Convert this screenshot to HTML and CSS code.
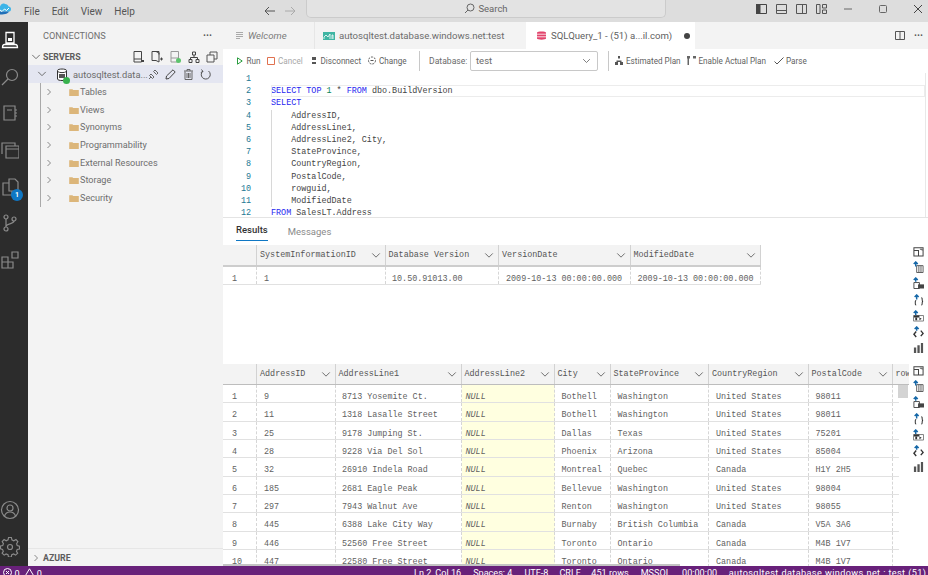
FILE: index.html
```html
<!DOCTYPE html>
<html lang="en">
<head>
<meta charset="utf-8">
<title>SQLQuery_1</title>
<link rel="stylesheet" href="styles.css">
</head>
<body>
<svg class="defs" width="0" height="0">
  <defs>
    <symbol id="chev-r" viewBox="0 0 8 10"><path d="M2 1l4 4-4 4" fill="none" stroke="#666" stroke-width="1"/></symbol>
    <symbol id="chev-d" viewBox="0 0 12 8"><path d="M1.5 1.5L6 6l4.5-4.5" fill="none" stroke="#555" stroke-width="1"/></symbol>
    <symbol id="folder" viewBox="0 0 12 10"><path d="M0 1.5h4l1 1h7V10H0z" fill="#dcb67a"/></symbol>
    <symbol id="r-save" viewBox="0 0 12 12"><path d="M1 2h10v9H1zM1 5h5v6" fill="none" stroke="#444" stroke-width="1.100"/><path d="M7.500 3.500h2.500v1.500" fill="none" stroke="#444"/></symbol>
    <symbol id="r-csv" viewBox="0 0 12 13"><path d="M4 5h7v7.500H4zM6.400 5v7.500M8.700 5v7.500" fill="none" stroke="#555"/><path d="M3 6V1M.8 3.200L3 1l2.200 2.200" fill="none" stroke="#1668a8" stroke-width="1.600"/></symbol>
    <symbol id="r-xls" viewBox="0 0 12 13"><path d="M1 6h6v6.500H1z" fill="none" stroke="#444"/><path d="M5.500 8H12v4.500H5.500z" fill="#444"/><path d="M3 5V1M.8 3.200L3 1l2.200 2.200" fill="none" stroke="#1668a8" stroke-width="1.600"/></symbol>
    <symbol id="r-json" viewBox="0 0 12 13"><path d="M3.500 7c-1.200 0-1 1.500-1 2.500s-.2 2.500 1 2.500M9 4c1.200 0 1 1.500 1 2.500s.2 1.500 1 1.500c-.8 0-1 .5-1 1.500s.2 2.500-1 2.500" fill="none" stroke="#333" stroke-width="1.100"/><path d="M4 6V1M1.800 3.200L4 1l2.200 2.200" fill="none" stroke="#1668a8" stroke-width="1.600"/></symbol>
    <symbol id="r-md" viewBox="0 0 12 13"><path d="M.5 6h11v6H.5z" fill="none" stroke="#777"/><path d="M3 5.500V1M.8 3.200L3 1l2.200 2.200" fill="none" stroke="#1668a8" stroke-width="1.600"/><path d="M1 6h6v2H1zM2.500 8.500h2v2.500h-2zM7 8l2.500 1.500L7 11z" fill="#333"/></symbol>
    <symbol id="r-xml" viewBox="0 0 12 13"><path d="M3.500 6L1 9l2.500 3M8.500 5L11 8l-2.500 3" fill="none" stroke="#333" stroke-width="1.500"/><path d="M4 5V1M1.800 3.200L4 1l2.200 2.200" fill="none" stroke="#1668a8" stroke-width="1.600"/></symbol>
    <symbol id="r-chart" viewBox="0 0 12 12"><path d="M1 6h2.500v6H1zM4.800 3.500h2.500V12H4.800zM8.600 1H11v11H8.600z" fill="#555"/></symbol>
  </defs>
</svg>

<div class="app">
  <header class="titlebar">
    <svg class="logo" width="11" height="12" viewBox="0 0 11 12"><path d="M0 3.500c1-2.500 3-3.500 5-2.500 2 0 3 1 3.500 2.500 1.500 0 2.500 1 2.500 2.500 0 2-1 2.500-2 2.500H0z" fill="#3cb4e8"/><path d="M0 8.500h9c-1 2-3 3-9 3z" fill="#1f6fb8"/><path d="M0 7l2 1.500L4.500 6l2 1.500L9 5" fill="none" stroke="#fff"/></svg>
    <nav class="menu"><span>File</span><span>Edit</span><span>View</span><span>Help</span></nav>
    <div class="history">
      <svg width="12" height="10" viewBox="0 0 12 10"><path d="M11 5H1.500M5 1L1 5l4 4" fill="none" stroke="#555"/></svg>
      <svg width="12" height="10" viewBox="0 0 12 10"><path d="M1 5h9.500M7 1l4 4-4 4" fill="none" stroke="#aaa"/></svg>
    </div>
    <div class="search">
      <svg width="11" height="11" viewBox="0 0 11 11"><circle cx="6.500" cy="4.500" r="3.500" fill="none" stroke="#666"/><path d="M4 7l-3 3" stroke="#666" fill="none"/></svg>
      <span>Search</span>
    </div>
    <div class="layout-icons">
      <svg width="11" height="10" viewBox="0 0 11 10"><path d="M.5.500h10v9H.5z" fill="none" stroke="#444"/><path d="M0 0h4.500v10H0z" fill="#444"/></svg>
      <svg width="11" height="10" viewBox="0 0 11 10"><path d="M.5.500h10v9H.5zM.5 6.500h10" fill="none" stroke="#555"/></svg>
      <svg width="11" height="10" viewBox="0 0 11 10"><path d="M.5.500h10v9H.5zM6.500.500v9" fill="none" stroke="#555"/></svg>
      <svg width="11" height="10" viewBox="0 0 11 10"><path d="M.5.500h3.500v9H.5zM6.500.500h4v3.500h-4zM6.500 6h4v3.500h-4z" fill="none" stroke="#555"/></svg>
    </div>
    <div class="window-controls">
      <svg width="10" height="10" viewBox="0 0 10 10"><path d="M1 5h8" stroke="#666"/></svg>
      <svg width="10" height="10" viewBox="0 0 10 10"><rect x="1.500" y="1.500" width="7" height="7" rx="1" fill="none" stroke="#666"/></svg>
      <svg width="10" height="10" viewBox="0 0 10 10"><path d="M1 1l8 8M9 1L1 9" stroke="#444" fill="none"/></svg>
    </div>
  </header>

  <div class="main">
    <aside class="activity">
      <div class="activity-top">
        <svg class="act" width="18" height="18" viewBox="0 0 18 18"><path d="M5 1.500h8V12H5zM1.500 16.500c0-2 1-3 2-3h11c1 0 2 1 2 3z" fill="none" stroke="#fff" stroke-width="1.300"/><path d="M7 7h4v3H7z" fill="#fff"/></svg>
        <svg class="act" width="18" height="18" viewBox="0 0 18 18"><circle cx="11" cy="7" r="5.500" fill="none" stroke="#8b8b8b" stroke-width="1.200"/><path d="M7 11l-6 6" stroke="#8b8b8b" stroke-width="1.200"/></svg>
        <svg class="act" width="18" height="18" viewBox="0 0 18 18"><path d="M3 2h11v14H3zM6 6h5M14 6h2M14 9h2M14 12h2" fill="none" stroke="#8b8b8b" stroke-width="1.200"/></svg>
        <svg class="act" width="18" height="18" viewBox="0 0 18 18"><path d="M5 5h13v12H5zM5 8h13M1 13V2h13v3" fill="none" stroke="#8b8b8b" stroke-width="1.200"/></svg>
        <div class="act-badge">
          <svg class="act" width="18" height="18" viewBox="0 0 18 18"><path d="M8 1h6l3 3v9H8zM8 5H2v12h9v-4" fill="none" stroke="#8b8b8b" stroke-width="1.200"/></svg>
          <span class="badge">1</span>
        </div>
        <svg class="act" width="18" height="18" viewBox="0 0 18 18"><circle cx="5" cy="3" r="2" fill="none" stroke="#8b8b8b" stroke-width="1.200"/><circle cx="5" cy="15" r="2" fill="none" stroke="#8b8b8b" stroke-width="1.200"/><circle cx="13" cy="5" r="2" fill="none" stroke="#8b8b8b" stroke-width="1.200"/><path d="M5 5v8M13 7c0 3-6 2-8 5" fill="none" stroke="#8b8b8b" stroke-width="1.200"/></svg>
        <svg class="act" width="18" height="18" viewBox="0 0 18 18"><path d="M1 6h6v5h5v6H1zM1 11h6v6M11 1h6v6h-6z" fill="none" stroke="#8b8b8b" stroke-width="1.200"/></svg>
      </div>
      <div class="activity-bottom">
        <svg class="act" width="20" height="20" viewBox="0 0 20 20"><circle cx="10" cy="10" r="8.500" fill="none" stroke="#8b8b8b" stroke-width="1.200"/><circle cx="10" cy="8" r="3" fill="none" stroke="#8b8b8b" stroke-width="1.200"/><path d="M4.500 16c1-3 3-4 5.500-4s4.500 1 5.500 4" fill="none" stroke="#8b8b8b" stroke-width="1.200"/></svg>
        <svg class="act" width="20" height="20" viewBox="0 0 20 20"><circle cx="10" cy="10" r="2.500" fill="none" stroke="#8b8b8b" stroke-width="1.200"/><path d="M8.500 1h3l.5 2.500 2 1 2.300-1.300 2 2.200L17 7.600l.6 1.900 2.400.6v3l-2.400.6-.8 1.900 1.300 2-2.200 2-2-1.300-2 .8-.5 2.400h-3l-.5-2.400-2-.8-2 1.300-2.200-2 1.300-2-.8-1.900L0 13v-3l2.400-.5.7-2L1.800 5.400l2-2.200 2.200 1.300 2-1z" transform="scale(.95) translate(.5 -.5)" fill="none" stroke="#8b8b8b" stroke-width="1.200"/></svg>
      </div>
    </aside>

    <aside class="sidebar">
      <div class="side-head"><span>CONNECTIONS</span><span class="dots">···</span></div>
      <div class="servers-row">
        <svg class="twist" width="10" height="8"><use href="#chev-d"/></svg>
        <span class="section-title">SERVERS</span>
        <div class="server-tools">
          <svg width="12" height="12" viewBox="0 0 12 12"><path d="M2 .500h7.500V11H2zM2 8h7.500" fill="none" stroke="#444"/><path d="M9 9h3v2H9z" fill="#444"/></svg>
          <svg width="12" height="12" viewBox="0 0 12 12"><path d="M1 .500h4l3 1.500v9l-3-1.500H1zM5 .500l3 0v3M9 8h3M10.500 6.500v3" fill="none" stroke="#444"/></svg>
          <svg width="12" height="12" viewBox="0 0 12 12"><path d="M2 .500h7.500V11H2zM2 7h7.500" fill="none" stroke="#999"/><circle cx="9.500" cy="9.500" r="2.500" fill="#5cc46c"/></svg>
          <svg width="12" height="12" viewBox="0 0 12 12"><path d="M4.500 1h3v3h-3zM1 8.500h3v3H1zM8 8.500h3v3H8zM6 4v2.500M2.500 8.500v-2h7v2" fill="none" stroke="#444"/></svg>
          <svg width="12" height="12" viewBox="0 0 12 12"><path d="M1 4h7v7H1zM4 4V1h7v7H8" fill="none" stroke="#555"/></svg>
        </div>
      </div>
      <div class="server-row">
        <svg class="twist-2" width="10" height="8"><use href="#chev-d"/></svg>
        <span class="db-icon">
          <svg width="12" height="13" viewBox="0 0 12 13"><path d="M1.500 2.500C1.500.500 10.500.500 10.500 2.500V11c0 2-9 2-9 0z" fill="#fff" stroke="#333"/><path d="M1.500 3.500c2 1.500 7 1.500 9 0" fill="none" stroke="#333"/><path d="M3 6h6v4H3z" fill="#555"/></svg>
          <i class="status-dot"></i>
        </span>
        <span class="server-name">autosqltest.data...</span>
        <div class="row-tools">
          <svg width="11" height="11" viewBox="0 0 11 11"><path d="M1 10l2-2M3 5l3 3-1.500 1.500-3-3zM7 1l3 3-1.500 1.500-3-3z" fill="none" stroke="#666"/></svg>
          <svg width="11" height="11" viewBox="0 0 11 11"><path d="M1 10l.5-3L8 .8l2.200 2.200L4 9.500z" fill="none" stroke="#444"/></svg>
          <svg width="11" height="11" viewBox="0 0 11 11"><path d="M1 2h9M4 2V.500h3V2M2 2.500V10.500h7V2.500M4 4v5M5.500 4v5M7 4v5" fill="none" stroke="#666"/></svg>
          <svg width="11" height="11" viewBox="0 0 11 11"><path d="M3 2a4.500 4.500 0 1 0 5.500 0M1.500.500L3 2.500.800 3.500" fill="none" stroke="#555"/></svg>
        </div>
      </div>
      <ul class="tree">
        <li><svg width="6" height="8"><use href="#chev-r"/></svg><svg class="fold" width="10" height="8"><use href="#folder"/></svg><span>Tables</span></li>
        <li><svg width="6" height="8"><use href="#chev-r"/></svg><svg class="fold" width="10" height="8"><use href="#folder"/></svg><span>Views</span></li>
        <li><svg width="6" height="8"><use href="#chev-r"/></svg><svg class="fold" width="10" height="8"><use href="#folder"/></svg><span>Synonyms</span></li>
        <li><svg width="6" height="8"><use href="#chev-r"/></svg><svg class="fold" width="10" height="8"><use href="#folder"/></svg><span>Programmability</span></li>
        <li><svg width="6" height="8"><use href="#chev-r"/></svg><svg class="fold" width="10" height="8"><use href="#folder"/></svg><span>External Resources</span></li>
        <li><svg width="6" height="8"><use href="#chev-r"/></svg><svg class="fold" width="10" height="8"><use href="#folder"/></svg><span>Storage</span></li>
        <li><svg width="6" height="8"><use href="#chev-r"/></svg><svg class="fold" width="10" height="8"><use href="#folder"/></svg><span>Security</span></li>
      </ul>
      <div class="azure-row">
        <svg width="6" height="8"><use href="#chev-r"/></svg>
        <span class="section-title">AZURE</span>
      </div>
    </aside>

    <section class="workspace">
      <div class="tabs">
        <div class="tab tab-welcome">
          <svg width="7" height="7" viewBox="0 0 7 7"><path d="M0 .500h7M0 2.500h7M0 4.500h7M0 6.500h4" stroke="#aaa" fill="none"/></svg>
          <em>Welcome</em>
        </div>
        <div class="tab tab-dash">
          <svg width="12" height="8" viewBox="0 0 12 8"><path d="M0 0h12v8H0z" fill="#3fb5a3"/><path d="M1 7V5l2-2 2 2 2-3v5M9 7V3h1v4" fill="none" stroke="#fff" stroke-width=".8"/></svg>
          <span>autosqltest.database.windows.net:test</span>
        </div>
        <div class="tab tab-query">
          <svg width="9" height="9" viewBox="0 0 9 9"><path d="M0 1.500C0 0 9 0 9 1.500v6C9 9 0 9 0 7.500z" fill="#e2446c"/><path d="M0 3.200h9M0 5.800h9" stroke="#fff" stroke-width=".8"/></svg>
          <span>SQLQuery_1 - (51) a...il.com)</span>
          <i class="dirty"></i>
        </div>
        <div class="tab-actions">
          <svg width="10" height="9" viewBox="0 0 10 9"><path d="M.5.500h9v8h-9zM5 .500v8" fill="none" stroke="#555"/></svg>
          <span class="dots">···</span>
        </div>
      </div>

      <div class="toolbar">
        <button class="tool t-run"><svg width="6" height="8" viewBox="0 0 6 8"><path d="M.5.800L5.200 4 .5 7.200z" fill="none" stroke="#2a9d3f"/></svg><span>Run</span></button>
        <button class="tool t-cancel tool-off"><svg width="8" height="8" viewBox="0 0 8 8"><path d="M.5.500h7v7h-7z" fill="none" stroke="#e0714f"/></svg><span>Cancel</span></button>
        <button class="tool t-disc"><svg width="6" height="9" viewBox="0 0 6 9"><path d="M1 1h4v3H1zM3 4v2M1 6h4v2H1z" fill="#555"/></svg><span>Disconnect</span></button>
        <button class="tool t-chg"><svg width="10" height="9" viewBox="0 0 10 9"><circle cx="5" cy="4.500" r="3.500" fill="none" stroke="#555" stroke-dasharray="2 1"/><path d="M3.500 4.500h3" stroke="#555"/></svg><span>Change</span></button>
        <i class="tool-sep"></i>
        <label class="db-label">Database:</label>
        <div class="db-select"><span>test</span><svg width="9" height="6"><use href="#chev-d"/></svg></div>
        <i class="tool-sep sep-2"></i>
        <button class="tool t-est"><svg width="8" height="9" viewBox="0 0 8 9"><path d="M3 0h2v2.500H3zM0 6h3v3H0zM5 6h3v3H5zM4 2.500V5M1.500 6V4.500h5V6" fill="#555"/></svg><span>Estimated Plan</span></button>
        <button class="tool t-act"><svg width="9" height="9" viewBox="0 0 9 9"><path d="M0 0h3v2.500H0zM.500 2.500V9h1.500V2.500zM3 1h3M6 0h3v2.500H6z" fill="#666"/></svg><span>Enable Actual Plan</span></button>
        <button class="tool t-parse"><svg width="10" height="8" viewBox="0 0 10 8"><path d="M.5 4.500L3 7l6.500-6.500" fill="none" stroke="#555"/></svg><span>Parse</span></button>
      </div>

      <div class="editor">
        <ol class="gutter">
          <li>1</li><li>2</li><li>3</li><li>4</li><li>5</li><li>6</li><li>7</li><li>8</li><li>9</li><li>10</li><li>11</li><li>12</li>
        </ol>
        <pre class="code"><code><span class="line">&nbsp;</span>
<span class="line current"><b class="kw">SELECT</b> <b class="kw">TOP</b> <b class="num">1</b> * <b class="kw">FROM</b> dbo.BuildVersion</span>
<span class="line"><b class="kw">SELECT</b></span>
<span class="line ind">    AddressID,</span>
<span class="line ind">    AddressLine1,</span>
<span class="line ind">    AddressLine2, City,</span>
<span class="line ind">    StateProvince,</span>
<span class="line ind">    CountryRegion,</span>
<span class="line ind">    PostalCode,</span>
<span class="line ind">    rowguid,</span>
<span class="line ind">    ModifiedDate</span>
<span class="line"><b class="kw">FROM</b> SalesLT.Address</span></code></pre>
      </div>

      <div class="result-tabs">
        <span class="rtab rtab-on">Results</span>
        <span class="rtab">Messages</span>
      </div>

      <div class="resultset set-1">
        <div class="grid grid-a">
          <div class="row head">
            <div class="c"></div>
            <div class="c"><span>SystemInformationID</span><svg width="10" height="7"><use href="#chev-d"/></svg></div>
            <div class="c"><span>Database Version</span><svg width="10" height="7"><use href="#chev-d"/></svg></div>
            <div class="c"><span>VersionDate</span><svg width="10" height="7"><use href="#chev-d"/></svg></div>
            <div class="c"><span>ModifiedDate</span><svg width="10" height="7"><use href="#chev-d"/></svg></div>
          </div>
          <div class="row">
            <div class="c num-cell">1</div><div class="c">1</div><div class="c">10.50.91013.00</div><div class="c">2009-10-13 00:00:00.000</div><div class="c">2009-10-13 00:00:00.000</div>
          </div>
        </div>
        <div class="rail">
          <svg width="11" height="11"><use href="#r-save"/></svg><svg width="11" height="12"><use href="#r-csv"/></svg><svg width="11" height="12"><use href="#r-xls"/></svg><svg width="11" height="12"><use href="#r-json"/></svg><svg width="11" height="12"><use href="#r-md"/></svg><svg width="11" height="12"><use href="#r-xml"/></svg><svg width="11" height="11"><use href="#r-chart"/></svg>
        </div>
      </div>

      <div class="resultset set-2">
        <div class="grid grid-b">
          <div class="row head">
            <div class="c"></div>
            <div class="c"><span>AddressID</span><svg width="10" height="7"><use href="#chev-d"/></svg></div>
            <div class="c"><span>AddressLine1</span><svg width="10" height="7"><use href="#chev-d"/></svg></div>
            <div class="c"><span>AddressLine2</span><svg width="10" height="7"><use href="#chev-d"/></svg></div>
            <div class="c"><span>City</span><svg width="10" height="7"><use href="#chev-d"/></svg></div>
            <div class="c"><span>StateProvince</span><svg width="10" height="7"><use href="#chev-d"/></svg></div>
            <div class="c"><span>CountryRegion</span><svg width="10" height="7"><use href="#chev-d"/></svg></div>
            <div class="c"><span>PostalCode</span><svg width="10" height="7"><use href="#chev-d"/></svg></div>
            <div class="c clip">row</div>
          </div>
          <div class="row"><div class="c num-cell">1</div><div class="c">9</div><div class="c">8713 Yosemite Ct.</div><div class="c null">NULL</div><div class="c">Bothell</div><div class="c">Washington</div><div class="c">United States</div><div class="c">98011</div></div>
          <div class="row"><div class="c num-cell">2</div><div class="c">11</div><div class="c">1318 Lasalle Street</div><div class="c null">NULL</div><div class="c">Bothell</div><div class="c">Washington</div><div class="c">United States</div><div class="c">98011</div></div>
          <div class="row"><div class="c num-cell">3</div><div class="c">25</div><div class="c">9178 Jumping St.</div><div class="c null">NULL</div><div class="c">Dallas</div><div class="c">Texas</div><div class="c">United States</div><div class="c">75201</div></div>
          <div class="row"><div class="c num-cell">4</div><div class="c">28</div><div class="c">9228 Via Del Sol</div><div class="c null">NULL</div><div class="c">Phoenix</div><div class="c">Arizona</div><div class="c">United States</div><div class="c">85004</div></div>
          <div class="row"><div class="c num-cell">5</div><div class="c">32</div><div class="c">26910 Indela Road</div><div class="c null">NULL</div><div class="c">Montreal</div><div class="c">Quebec</div><div class="c">Canada</div><div class="c">H1Y 2H5</div></div>
          <div class="row"><div class="c num-cell">6</div><div class="c">185</div><div class="c">2681 Eagle Peak</div><div class="c null">NULL</div><div class="c">Bellevue</div><div class="c">Washington</div><div class="c">United States</div><div class="c">98004</div></div>
          <div class="row"><div class="c num-cell">7</div><div class="c">297</div><div class="c">7943 Walnut Ave</div><div class="c null">NULL</div><div class="c">Renton</div><div class="c">Washington</div><div class="c">United States</div><div class="c">98055</div></div>
          <div class="row"><div class="c num-cell">8</div><div class="c">445</div><div class="c">6388 Lake City Way</div><div class="c null">NULL</div><div class="c">Burnaby</div><div class="c">British Columbia</div><div class="c">Canada</div><div class="c">V5A 3A6</div></div>
          <div class="row"><div class="c num-cell">9</div><div class="c">446</div><div class="c">52560 Free Street</div><div class="c null">NULL</div><div class="c">Toronto</div><div class="c">Ontario</div><div class="c">Canada</div><div class="c">M4B 1V7</div></div>
          <div class="row"><div class="c num-cell">10</div><div class="c">447</div><div class="c">22580 Free Street</div><div class="c null">NULL</div><div class="c">Toronto</div><div class="c">Ontario</div><div class="c">Canada</div><div class="c">M4B 1V7</div></div>
          <i class="vthumb"></i>
          <i class="hthumb"></i>
        </div>
        <div class="rail">
          <svg width="11" height="11"><use href="#r-save"/></svg><svg width="11" height="12"><use href="#r-csv"/></svg><svg width="11" height="12"><use href="#r-xls"/></svg><svg width="11" height="12"><use href="#r-json"/></svg><svg width="11" height="12"><use href="#r-md"/></svg><svg width="11" height="12"><use href="#r-xml"/></svg><svg width="11" height="11"><use href="#r-chart"/></svg>
        </div>
      </div>
    </section>
  </div>

  <footer class="status">
    <div class="status-left">
      <svg width="9" height="9" viewBox="0 0 9 9"><circle cx="4.500" cy="4.500" r="4" fill="none" stroke="#fff"/><path d="M3 3l3 3M6 3L3 6" stroke="#fff"/></svg><span>0</span>
      <svg class="warn" width="9" height="8" viewBox="0 0 9 8"><path d="M4.500.800L8.500 7.500h-8z" fill="none" stroke="#fff"/></svg><span>0</span>
    </div>
    <div class="status-right">
      <span class="s1">Ln 2, Col 16</span>
      <span class="s2">Spaces: 4</span>
      <span class="s3">UTF-8</span>
      <span class="s4">CRLF</span>
      <span class="s5">451 rows</span>
      <span class="s6">MSSQL</span>
      <span class="s7">00:00:00</span>
      <span class="s8">autosqltest.database.windows.net : test (51)</span>
      <svg width="10" height="10" viewBox="0 0 10 10"><path d="M2 8V4a3 3 0 0 1 6 0v4z" fill="none" stroke="#fff"/></svg>
    </div>
  </footer>
</div>
</body>
</html>
```

FILE: styles.css
```css
* { box-sizing: border-box; }
html, body { margin: 0; padding: 0; height: 100%; overflow: hidden; }
body { font-family: Roboto, "Open Sans", sans-serif; font-size: 9px; color: #616161; background: #fff; }
.defs { position: absolute; }
svg { display: block; flex: none; }
ul, ol { list-style: none; margin: 0; padding: 0; }

.app { width: 928px; height: 575px; display: flex; flex-direction: column; overflow: hidden; }

/* Title bar */
.titlebar { height: 22px; flex: none; background: #dddddd; display: flex; align-items: center; position: relative; }
.logo { margin-top: -4px; margin-right: 13px; }
.menu { width: 240px; display: flex; gap: 12px; font-size: 10px; color: #555; }
.history { display: flex; gap: 8px; }
.search { width: 360px; height: 18px; margin: -4px 0 0 10px; background: #e3e3e3; border: 1px solid #cbcbcb; border-top: 0; border-radius: 0 0 5px 5px; display: flex; align-items: center; justify-content: center; gap: 3px; font-size: 9.500px; color: #666; }
.layout-icons { display: flex; gap: 9px; margin-left: 90px; margin-top: -4px; }
.window-controls { display: flex; gap: 25px; margin-left: 16px; margin-top: -4px; }

.main { flex: 1; min-height: 0; display: flex; }

/* Activity bar */
.activity { width: 28px; flex: none; background: #2c2c2c; display: flex; flex-direction: column; justify-content: space-between; align-items: center; padding: 9px 8px 9px 0; }
.activity-top { display: flex; flex-direction: column; gap: 18.700px; align-items: center; }
.activity-bottom { display: flex; flex-direction: column; gap: 17px; align-items: center; }
.act-badge { position: relative; }
.badge { position: absolute; right: -4px; bottom: -5px; width: 12px; height: 12px; border-radius: 50%; background: #0f77c4; color: #fff; font-size: 7px; font-weight: 700; display: flex; align-items: center; justify-content: center; }

/* Sidebar */
.sidebar { width: 195px; flex: none; background: #f3f3f3; display: flex; flex-direction: column; }
.side-head { height: 26px; display: flex; align-items: center; justify-content: space-between; padding: 0 11px 0 15px; font-size: 9.200px; color: #6f6f6f; flex: none; }
.dots { font-size: 10px; letter-spacing: 0; color: #555; font-weight: 700; }
.servers-row { height: 17px; display: flex; align-items: center; padding-left: 3px; flex: none; }
.twist { margin-right: 2px; }
.section-title { font-weight: 700; font-size: 8.800px; color: #5c5c5c; }
.server-tools { display: flex; gap: 6.500px; margin-left: auto; margin-right: 5px; }
.server-row { height: 18px; background: #e4e6f1; display: flex; align-items: center; padding-left: 9px; flex: none; }
.twist-2 { margin-right: 9px; }
.db-icon { position: relative; margin-right: 5px; }
.status-dot { position: absolute; right: -2px; bottom: -3px; width: 7px; height: 7px; border-radius: 50%; background: #37b24d; }
.server-name { font-size: 9.300px; color: #6b6b6b; white-space: nowrap; }
.row-tools { display: flex; gap: 6.500px; margin-left: auto; margin-right: 12px; }
.tree { padding-left: 12.500px; border: 0; position: relative; flex: none; }
.tree::before { content: ""; position: absolute; left: 12px; top: 0; bottom: 0; width: 1px; background: #a9a9a9; }
.tree li { height: 17.700px; display: flex; align-items: center; padding-left: 5px; font-size: 9.100px; color: #6e6e6e; white-space: nowrap; }
.fold { margin: 0 1.500px 0 17px; }
.azure-row { margin-top: auto; height: 18px; border-top: 1px solid #e6e6e6; display: flex; align-items: center; padding-left: 5px; gap: 4px; flex: none; }

/* Workspace */
.workspace { flex: 1; min-width: 0; display: flex; flex-direction: column; background: #fff; }
.tabs { height: 27px; flex: none; background: #f3f3f3; display: flex; font-size: 9.600px; color: #6c6c6c; }
.tab { display: flex; align-items: center; height: 100%; white-space: nowrap; }
.tab-welcome { width: 92px; padding-left: 13px; gap: 5px; border-right: 1px solid #e6e6e6; }
.tab-welcome em { color: #7a7a7a; }
.tab-dash { width: 211px; padding-left: 8px; gap: 4px; }
.tab-query { width: 169px; padding-left: 11px; gap: 5px; background: #fff; color: #616161; }
.dirty { width: 6px; height: 6px; border-radius: 50%; background: #444; margin-left: 7px; }
.tab-actions { margin-left: auto; display: flex; align-items: center; gap: 9px; padding-right: 5px; }

.toolbar { height: 23px; flex: none; display: flex; align-items: center; padding-left: 14px; font-size: 8.150px; color: #5f5f5f; }
.tool { all: unset; display: flex; align-items: center; gap: 3.500px; white-space: nowrap; }
.t-run { width: 30px; }
.t-cancel { width: 44px; gap: 3px; }
.t-disc { width: 56px; }
.t-chg { width: 44px; gap: 2px; }
.tool-off { color: #a8a8a8; }
.tool-sep { width: 1px; height: 20px; background: #c8c8c8; margin: 0 9px 0 8px; }
.db-label { width: 41px; font-size: 8.600px; color: #6a6a6a; }
.db-select { width: 128px; height: 20px; border: 1px solid #c8c8c8; border-radius: 2px; display: flex; align-items: center; justify-content: space-between; padding: 0 6px 0 5px; font-size: 9.500px; color: #6a6a6a; }
.sep-2 { margin: 0 6px 0 10px; }
.t-est { width: 72px; gap: 3px; }
.t-act { width: 87px; gap: 2.500px; }
.t-parse { gap: 2px; }

.editor { height: 146px; flex: none; display: flex; padding-top: 1px; border-bottom: 1px solid #e4e4e4; overflow: hidden; position: relative; font-family: "Liberation Mono", monospace; font-size: 8.420px; line-height: 12.200px; }
.gutter { width: 48px; flex: none; padding-top: 0; text-align: right; padding-right: 20px; color: #237893; }
.gutter li { height: 12.200px; }
.code { margin: 0; flex: 1; font: inherit; color: #444; border-right: 1px solid #e8e8e8; margin-right: 2px; }
.code code { font: inherit; }
.line { display: inline-block; width: 100%; height: 12.200px; vertical-align: top; }
.current { outline: 1px solid #ececec; outline-offset: -1px; }
.ind { box-shadow: inset 1px 0 0 #d8d8d8; }
.kw { font-weight: 400; color: #1f1ff0; }
.num { font-weight: 400; color: #098658; }

.result-tabs { height: 27px; flex: none; display: flex; align-items: flex-start; gap: 20px; padding: 6px 0 0 13px; font-size: 9.500px; color: #8a8a8a; }
.rtab { padding-top: 2px; height: 16px; }
.rtab-on { color: #333; border-bottom: 1px solid #0f77c4; height: 17px; font-weight: 500; padding-top: 0; }

/* Grids */
.resultset { display: flex; flex: none; }
.set-1 { height: 119px; }
.set-2 { flex: 1; min-height: 0; height: 202px; }
.grid { position: relative; width: 686px; flex: none; overflow: hidden; font-family: "Liberation Mono", monospace; font-size: 8.420px; color: #5f5f5f; }
.row { display: grid; height: 18.350px; border-bottom: 1px solid #e1e1e1; align-items: stretch; }
.grid-a .row { grid-template-columns: 34px 128.500px 113.500px 131.500px 130.500px; width: 538px; }
.grid-b .row { grid-template-columns: 34px 78.500px 126px 93px 56px 98.500px 99.500px 84px 1fr; width: 676px; }
.grid-b .head { width: 686px; }
.c { display: flex; align-items: center; padding: 6.500px 0 0 7px; white-space: nowrap; overflow: hidden; border-right: 1px dashed #d6d6d6; }
.c:nth-child(3) { padding-left: 6.500px; }
.c.num-cell { padding-left: 9px; }
.head { height: 21px; background: #f3f3f3; border-bottom: 2px solid #cdcdcd; color: #555; }
.grid-a .head { height: 22px; }
.grid-b .head { height: 21px; border-bottom-width: 1px; border-bottom-color: #bdbdbd; }
.head .c { padding: 0 4px 0 3px; justify-content: space-between; border-right: 1px solid #d2d2d2; }
.head .clip { padding-right: 0; border: 0; }
.c.null { background: #ffffe0; font-style: italic; padding-left: 4px; }
.vthumb { position: absolute; left: 675px; top: 21px; width: 10px; height: 13px; background: #d3d3d3; }
.hthumb { position: absolute; left: 0; bottom: 0; width: 457px; height: 2px; background: #c4c4c4; }
.rail { flex: 1; display: flex; flex-direction: column; align-items: center; gap: 4.200px; padding-top: 1px; }

/* Status bar */
.status { height: 9px; flex: none; background: #68217a; color: #fff; display: flex; font-size: 9.100px; line-height: 13px; overflow: visible; position: relative; }
.status-left { display: flex; gap: 2.500px; padding: 2px 0 0 3px; align-items: flex-start; }
.warn { margin-left: 3px; }
.status-right { position: absolute; left: 414px; top: 1px; display: flex; white-space: nowrap; }
.status-right svg { margin-left: 11px; margin-top: 1px; }
.s1, .s2, .s3, .s5, .s6 { margin-right: 12px; }
.s3 { margin-right: 11px; }
.s4 { margin-right: 10.500px; }
.s6 { margin-right: 11.500px; }
.s7 { margin-right: 11.500px; }
.s8 { letter-spacing: .4px; }
```
